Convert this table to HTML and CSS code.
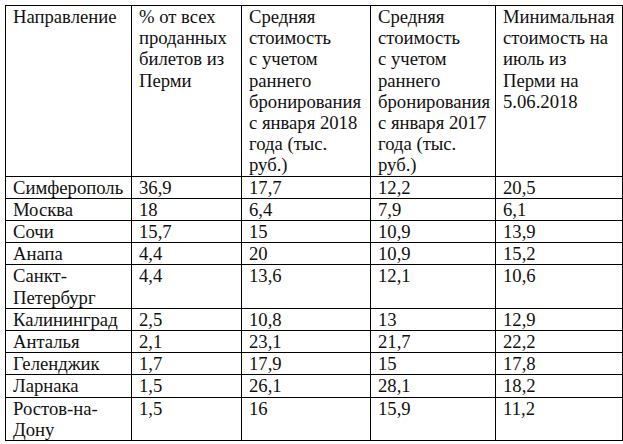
FILE: index.html
```html
<!DOCTYPE html>
<html lang="ru">
<head>
<meta charset="utf-8">
<link rel="stylesheet" href="styles.css">
</head>
<body>
<table class="tbl">
  <colgroup>
    <col class="c1"><col class="c2"><col class="c3"><col class="c4"><col class="c5">
  </colgroup>
  <tr class="head">
    <td>Направление</td>
    <td>% от всех проданных билетов из Перми</td>
    <td>Средняя стоимость с&nbsp;учетом раннего бронирования с&nbsp;января 2018 года (тыс. руб.)</td>
    <td>Средняя стоимость с&nbsp;учетом раннего бронирования с&nbsp;января 2017 года (тыс. руб.)</td>
    <td>Минимальная стоимость на июль из Перми на 5.06.2018</td>
  </tr>
  <tr><td>Симферополь</td><td>36,9</td><td>17,7</td><td>12,2</td><td>20,5</td></tr>
  <tr><td>Москва</td><td>18</td><td>6,4</td><td>7,9</td><td>6,1</td></tr>
  <tr><td>Сочи</td><td>15,7</td><td>15</td><td>10,9</td><td>13,9</td></tr>
  <tr><td>Анапа</td><td>4,4</td><td>20</td><td>10,9</td><td>15,2</td></tr>
  <tr><td>Санкт-Петербург</td><td>4,4</td><td>13,6</td><td>12,1</td><td>10,6</td></tr>
  <tr><td>Калининград</td><td>2,5</td><td>10,8</td><td>13</td><td>12,9</td></tr>
  <tr><td>Анталья</td><td>2,1</td><td>23,1</td><td>21,7</td><td>22,2</td></tr>
  <tr><td>Геленджик</td><td>1,7</td><td>17,9</td><td>15</td><td>17,8</td></tr>
  <tr><td>Ларнака</td><td>1,5</td><td>26,1</td><td>28,1</td><td>18,2</td></tr>
  <tr><td>Ростов-на-Дону</td><td>1,5</td><td>16</td><td>15,9</td><td>11,2</td></tr>
</table>
</body>
</html>
```
FILE: styles.css
```css
html, body {
  margin: 0;
  padding: 0;
  background: #ffffff;
}
body {
  padding: 5px;
}
.tbl {
  border-collapse: collapse;
  table-layout: fixed;
  width: 617px;
  font-family: "Liberation Serif", "Times New Roman", serif;
  font-size: 18.67px;
  line-height: 21.2px;
  color: #111111;
}
.c1 { width: 126px; }
.c2 { width: 110px; }
.c3 { width: 129px; }
.c4 { width: 125px; }
.c5 { width: 127px; }
.tbl td {
  border: 1px solid #000000;
  padding: 0 3px 0 7px;
  vertical-align: top;
  text-align: left;
  word-break: break-word;
}
```
